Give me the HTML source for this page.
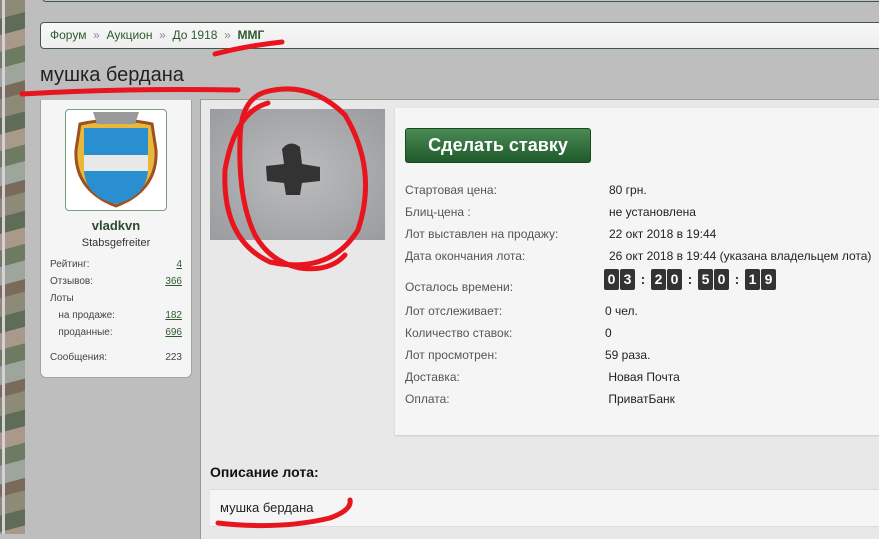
<!DOCTYPE html><html><head><meta charset="utf-8"><style>
*{margin:0;padding:0;box-sizing:border-box}
body{width:879px;height:534px;overflow:hidden;background:#bebebe;font-family:"Liberation Sans","DejaVu Sans",sans-serif;position:relative;font-size:12px;color:#333}
.abs{position:absolute}
.camo{left:0;top:0;width:25px;height:534px;background:repeating-linear-gradient(165deg,#8d8a78 0 18px,#5f6d58 18px 34px,#a8998a 34px 50px,#6e7b63 50px 66px,#9ea59c 66px 84px,#7a6a5a 84px 96px);}
.camo:before{content:"";position:absolute;left:2px;top:0;width:3px;height:534px;background:#d8d0d8}
.green{color:#2d5a2d}
.d{width:15px;height:21px;background:#333;border-radius:2px;text-align:center;line-height:21px}.c{color:#333;width:14px;text-align:center;line-height:21px}
</style></head><body>
<div class="abs camo"></div>
<div class="abs" style="left:42px;top:-2px;width:840px;height:4px;border:1px solid #3e5a45;border-top:none;background:#c4c4c4;border-radius:0 0 0 4px"></div>
<div class="abs" style="left:40px;top:22px;width:845px;height:27px;border:1px solid #3e5a45;border-radius:4px;background:linear-gradient(#f8f8f8,#eee);font-size:12px;line-height:25px;padding-left:9px;color:#2d5a2d">Форум <span style="color:#888">&nbsp;»&nbsp;</span> Аукцион <span style="color:#888">&nbsp;»&nbsp;</span> До 1918 <span style="color:#888">&nbsp;»&nbsp;</span> <b>ММГ</b></div>
<div class="abs" style="left:40px;top:64px;font-size:20px;color:#222">мушка бердана</div>
<div class="abs" style="left:40px;top:100px;width:152px;height:278px;background:#f5f5f5;border:1px solid #9aaa9a;border-top:none;border-radius:0 0 6px 6px"></div>
<div class="abs" style="left:65px;top:109px;width:102px;height:102px;border:1px solid #7a9a7a;border-radius:4px;background:#fff">
<svg width="100" height="100" viewBox="0 0 100 100"><path d="M14 14 Q50 6 86 14 L90 40 Q92 80 50 96 Q8 80 10 40Z" fill="#e8b83a" stroke="#a05020" stroke-width="3"/><path d="M27 2h46l-4 12H31z" fill="#999"/><path d="M18 18h64v40q0 28-32 36q-32-8-32-36z" fill="#2a8fd0"/><rect x="18" y="45" width="64" height="16" fill="#e8e8e8"/></svg></div>
<div class="abs" style="left:40px;top:218px;width:152px;text-align:center;font-weight:bold;font-size:13px;color:#2d4a2d">vladkvn</div>
<div class="abs" style="left:40px;top:237px;width:152px;text-align:center;font-size:11px">Stabsgefreiter</div>
<div class="abs" style="left:50px;top:256px;width:132px;font-size:10px;line-height:17px;color:#444">
<div>Рейтинг:<span style="float:right;text-decoration:underline" class="green">4</span></div>
<div>Отзывов:<span style="float:right;text-decoration:underline" class="green">366</span></div>
<div>Лоты</div>
<div>&nbsp;&nbsp;&nbsp;на продаже:<span style="float:right;text-decoration:underline" class="green">182</span></div>
<div>&nbsp;&nbsp;&nbsp;проданные:<span style="float:right;text-decoration:underline" class="green">696</span></div>
<div style="margin-top:8px">Сообщения:<span style="float:right">223</span></div></div>
<div class="abs" style="left:200px;top:99px;width:690px;height:440px;background:#e8e8e8;border-left:1px solid #8aa08a;border-top:1px solid #8aa08a"></div>
<div class="abs" style="left:210px;top:109px;width:175px;height:131px;background:radial-gradient(ellipse at 50% 50%,#bbbcbe,#9a9b9e)">
<svg width="175" height="131"><path d="M72 40 Q80 30 90 38 L92 55 L110 58 L110 72 L92 74 L90 86 L76 86 L74 74 L57 72 L56 57 L74 55Z" fill="#333"/></svg></div>
<div class="abs" style="left:395px;top:108px;width:490px;height:327px;background:#f5f5f5;box-shadow:0 1px 2px #ccc"></div>
<div class="abs" style="left:405px;top:128px;width:186px;height:35px;border:1px solid #1a4a1a;border-radius:3px;background:linear-gradient(#4a8a55,#1f5a2a);color:#fff;font-weight:bold;font-size:18px;text-align:center;line-height:33px">Сделать ставку</div>
<div class="abs" style="left:405px;top:179px;font-size:12px;line-height:22px;color:#555">
<div>Стартовая цена:</div><div>Блиц-цена :</div><div>Лот выставлен на продажу:</div><div>Дата окончания лота:</div>
<div style="margin-top:9px">Осталось времени:</div>
<div style="margin-top:2px">Лот отслеживает:</div><div>Количество ставок:</div><div>Лот просмотрен:</div><div>Доставка:</div><div>Оплата:</div></div>
<div class="abs" style="left:609px;top:179px;font-size:12px;line-height:22px;color:#222;white-space:nowrap">
<div>80 грн.</div><div>не установлена</div><div>22 окт 2018 в 19:44</div><div>26 окт 2018 в 19:44 (указана владельцем лота)</div></div>
<div class="abs" style="left:604px;top:269px;font-size:14px;color:#fff;display:flex;gap:1px;font-weight:bold">
<span class="d">0</span><span class="d">3</span><span class="c">:</span><span class="d">2</span><span class="d">0</span><span class="c">:</span><span class="d">5</span><span class="d">0</span><span class="c">:</span><span class="d">1</span><span class="d">9</span></div>
<div class="abs" style="left:605px;top:300px;font-size:12px;line-height:22px;color:#222">
<div>0 чел.</div><div>0</div><div>59 раза.</div><div>&nbsp;Новая Почта</div><div>&nbsp;ПриватБанк</div></div>
<div class="abs" style="left:210px;top:464px;font-weight:bold;font-size:14px;color:#111">Описание лота:</div>
<div class="abs" style="left:210px;top:489px;width:680px;height:38px;background:#f5f5f5;border-top:1px solid #ddd;border-bottom:1px solid #ddd;font-size:13px;color:#222;padding:10px 0 0 10px">мушка бердана</div>
<svg class="abs" style="left:0;top:0" width="879" height="534" fill="none" stroke="#e8151e" stroke-width="5" stroke-linecap="round">
<path d="M215 54 Q245 46 282 42"/>
<path d="M22 94 Q120 88 238 90"/>
<path d="M268 103 Q235 112 225 170 Q222 240 270 262 Q330 275 358 230 Q378 170 345 115 Q310 80 265 92 Q240 100 240 140 Q238 200 255 235 Q270 262 300 268 Q330 272 345 255"/>
<path d="M218 523 Q280 530 330 518 Q352 510 350 500"/>
</svg>
</body></html>
